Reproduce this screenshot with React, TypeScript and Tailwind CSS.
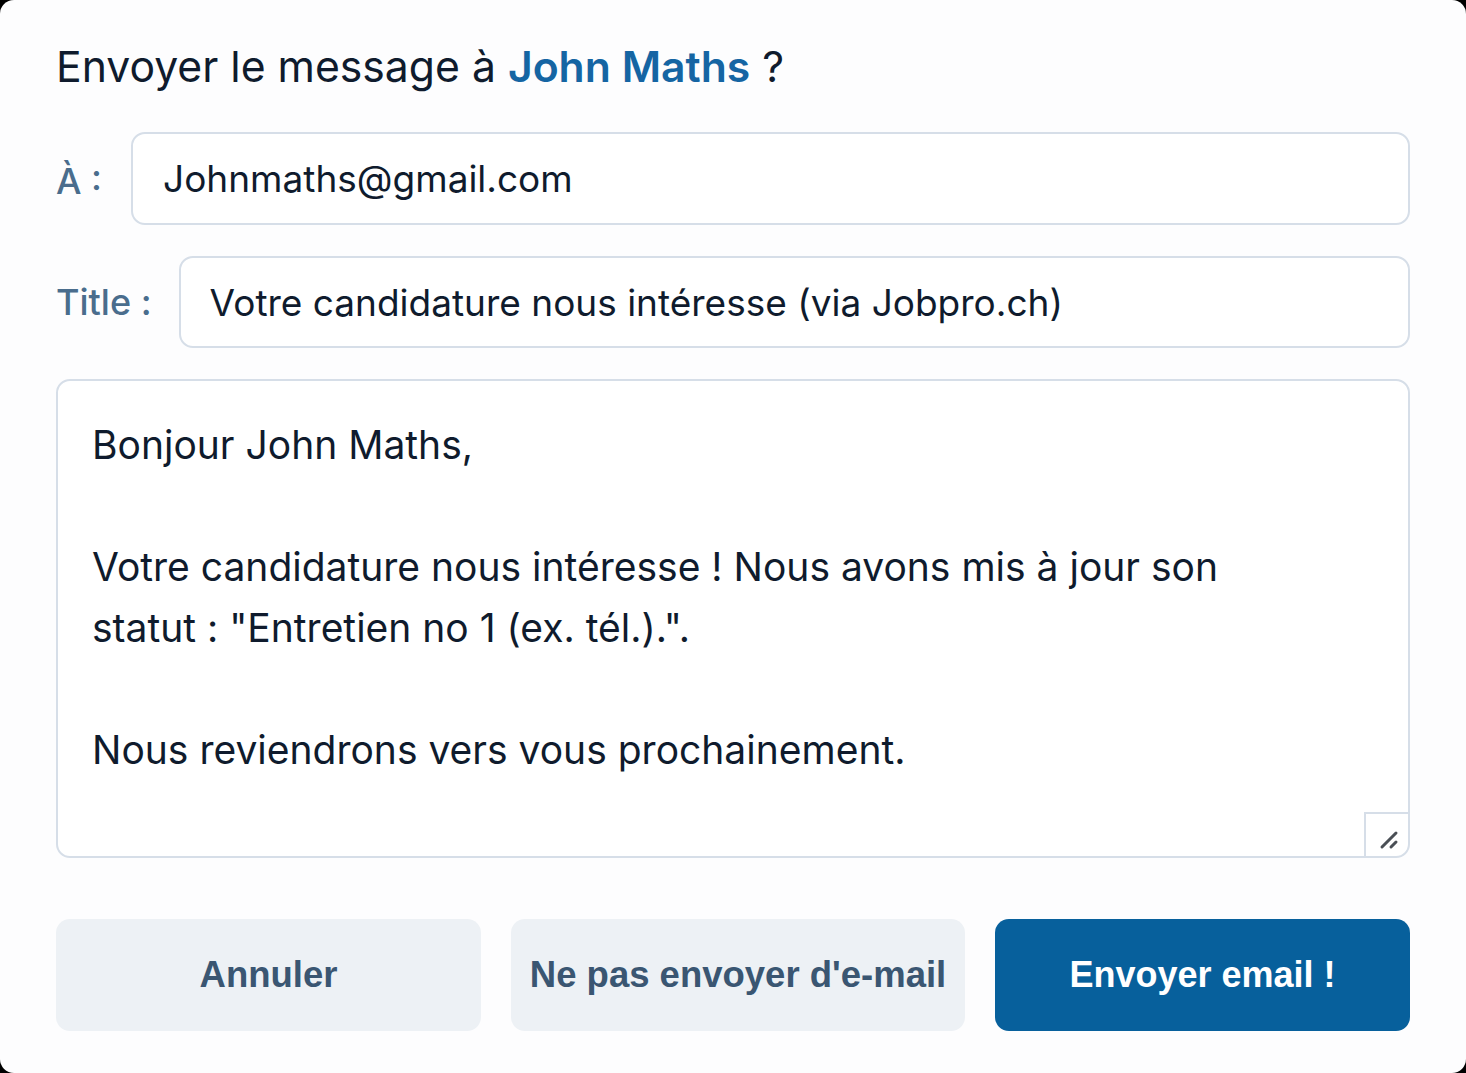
import { useState } from "react";

const message =
  "Bonjour John Maths,\n\nVotre candidature nous intéresse ! Nous avons mis à jour son\nstatut : \"Entretien no 1 (ex. tél.).\".\n\nNous reviendrons vers vous prochainement.";

const SendEmailDialog = () => {
  const [to, setTo] = useState("Johnmaths@gmail.com");
  const [title, setTitle] = useState("Votre candidature nous intéresse (via Jobpro.ch)");
  const [body, setBody] = useState(message);

  return (
    <div className="min-h-screen bg-black">
      <div
        className="h-[1073px] w-full rounded-[14px] bg-[#fdfdfe] px-[56px] pt-[40px]"
        style={{ fontFamily: "Inter, 'Noto Sans', sans-serif" }}
      >
        <h2 className="text-[42.7px] leading-[54px] text-[#0f1b2d]">
          Envoyer le message à <span className="font-semibold text-[#1565a3]">John Maths</span> ?
        </h2>

        {/* Recipient */}
        <div className="mt-[38px] flex items-center gap-[29px]">
          <label className="mt-[4px] text-[36px] font-medium text-[#4a6d8d]">À :</label>
          <input
            value={to}
            onChange={(e) => setTo(e.target.value)}
            className="h-[93px] flex-1 rounded-[14px] border-2 border-[#d6dee8] bg-white px-[30px] text-[37px] text-[#0f1b2d] outline-none"
          />
        </div>

        {/* Title */}
        <div className="mt-[31px] flex items-center gap-[27px]">
          <label className="text-[36px] font-medium text-[#4a6d8d]">Title :</label>
          <input
            value={title}
            onChange={(e) => setTitle(e.target.value)}
            className="h-[92px] flex-1 rounded-[14px] border-2 border-[#d6dee8] bg-white px-[29px] text-[37px] text-[#0f1b2d] outline-none"
          />
        </div>

        {/* Message */}
        <div className="relative mt-[31px]">
          <textarea
            value={body}
            onChange={(e) => setBody(e.target.value)}
            className="block h-[479px] w-full resize-none rounded-[14px] border-2 border-[#d6dee8] bg-white px-[34px] pt-[33px] text-[39px] leading-[61px] text-[#0f1b2d] outline-none"
          />
          <div className="absolute bottom-0 right-0 flex h-[46px] w-[46px] items-center justify-center rounded-br-[14px] border-l-2 border-t-2 border-[#d6dee8]">
            <svg width="26" height="26" viewBox="0 0 26 26" className="mt-[8px] ml-[6px]">
              <line x1="4" y1="20" x2="18" y2="6" stroke="#4a4f55" strokeWidth="3" strokeLinecap="round" />
              <line x1="13" y1="20" x2="18" y2="15" stroke="#4a4f55" strokeWidth="3" strokeLinecap="round" />
            </svg>
          </div>
        </div>

        {/* Actions */}
        <div
          className="mt-[61px] flex gap-[30px]"
          style={{ fontFamily: "'Liberation Sans', Arial, sans-serif" }}
        >
          <button className="h-[112px] w-[425px] rounded-[14px] bg-[#edf1f5] text-[36.5px] font-bold text-[#3a5672]">
            Annuler
          </button>
          <button className="h-[112px] w-[454px] rounded-[14px] bg-[#edf1f5] text-[36.5px] font-bold text-[#3a5672]">
            Ne pas envoyer d'e-mail
          </button>
          <button className="h-[112px] flex-1 rounded-[14px] bg-[#07609c] text-[36px] font-bold text-white">
            Envoyer email !
          </button>
        </div>
      </div>
    </div>
  );
};

export default function App() {
  return <SendEmailDialog />;
}
